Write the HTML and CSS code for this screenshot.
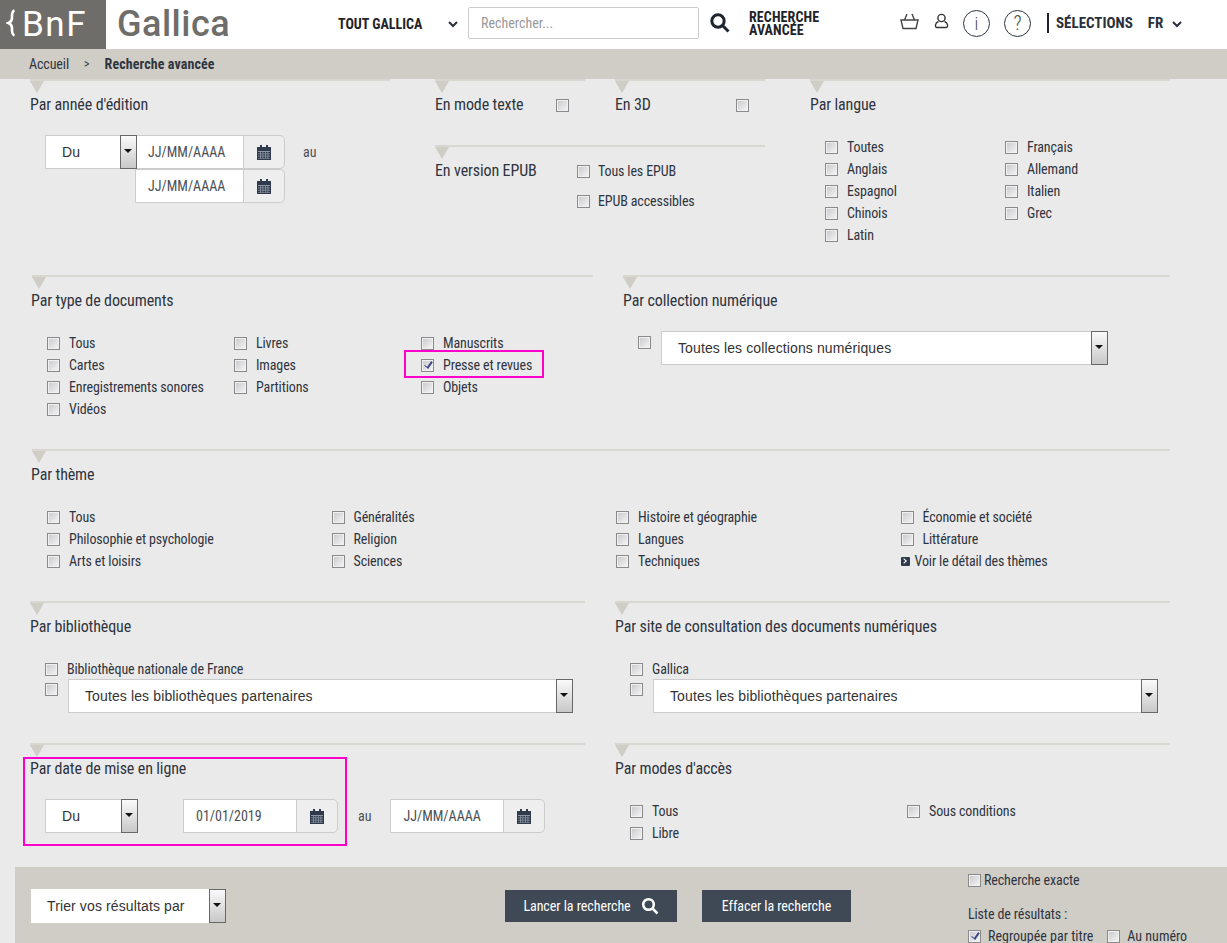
FILE: index.html
```html
<!DOCTYPE html>
<html lang="fr">
<head>
    <meta charset="UTF-8">
    <meta name="viewport" content="width=device-width, initial-scale=1.0">
    <title>Recherche avancée - Gallica</title>
    <link rel="stylesheet" href="styles.css">
</head>
<body>

    <header class="topbar">
        <div class="logo-bnf">
            <svg class="brace" viewBox="0 0 10 28"><path d="M8.500 1.500C5.500 2.500 6 6 6 9 6 11 5 13 2.500 14 5 15 6 17 6 19 6 22 5.500 25.500 8.500 26.500" /></svg>
            <span>BnF</span>
        </div>
        <div class="logo-gallica">Gallica</div>
        <div class="scope">TOUT GALLICA</div>
        <svg class="chevron scope-chevron" viewBox="0 0 10 7"><path d="M1 1l4 4 4-4" /></svg>
        <input class="search" type="text" placeholder="Rechercher...">
        <svg class="search-icon" viewBox="0 0 20 20"><circle cx="8" cy="8" r="6.200" /><path d="M12.500 12.500l6 6" /></svg>
        <div class="advanced">RECHERCHE<br>AVANCÉE</div>
        <svg class="basket" viewBox="0 0 19 17"><path d="M1 7h17l-2 8.500H3zM4.500 7L7 1M14.500 7L12 1" /></svg>
        <svg class="user" viewBox="0 0 15 16"><circle cx="7.500" cy="5" r="3.600" /><path d="M4.500 8.500C1 9.500 .5 14.500 3 14.500h9c2.500 0 2-5-1.500-6" /></svg>
        <div class="round info">i</div>
        <div class="round help">?</div>
        <div class="selections">SÉLECTIONS</div>
        <div class="lang">FR</div>
        <svg class="chevron lang-chevron" viewBox="0 0 10 7"><path d="M1 1l4 4 4-4" /></svg>
    </header>

    <nav class="crumbs">
        <span>Accueil</span>
        <span class="crumb-sep">&gt;</span>
        <b>Recherche avancée</b>
    </nav>

    <main class="form">

        <section class="row row-1">
            <div class="block col-year">
                <h3>Par année d'édition</h3>
                <div class="date-line first-line">
                    <div class="select select-du"><span>Du</span><i class="arrow"></i></div>
                    <div class="date date-joined"><span class="date-value">JJ/MM/AAAA</span><span class="addon"><svg class="cal" viewBox="0 0 14 15"><use href="#cal" /></svg></span></div>
                    <span class="au">au</span>
                </div>
                <div class="date-line second-line">
                    <div class="date date-joined"><span class="date-value">JJ/MM/AAAA</span><span class="addon"><svg class="cal" viewBox="0 0 14 15"><use href="#cal" /></svg></span></div>
                </div>
            </div>

            <div class="col-middle">
                <div class="middle-top">
                    <div class="block col-small">
                        <h3 class="inline-title">En mode texte <i class="cb"></i></h3>
                    </div>
                    <div class="block col-small">
                        <h3 class="inline-title">En 3D <i class="cb"></i></h3>
                    </div>
                </div>
                <div class="block">
                    <div class="epub">
                        <h3>En version EPUB</h3>
                        <div class="epub-list">
                            <label class="item"><i class="cb"></i>Tous les EPUB</label>
                            <label class="item"><i class="cb"></i>EPUB accessibles</label>
                        </div>
                    </div>
                </div>
            </div>

            <div class="block col-lang">
                <h3>Par langue</h3>
                <div class="checks lang-checks">
                    <label class="item"><i class="cb"></i>Toutes</label>
                    <label class="item"><i class="cb"></i>Français</label>
                    <label class="item"><i class="cb"></i>Anglais</label>
                    <label class="item"><i class="cb"></i>Allemand</label>
                    <label class="item"><i class="cb"></i>Espagnol</label>
                    <label class="item"><i class="cb"></i>Italien</label>
                    <label class="item"><i class="cb"></i>Chinois</label>
                    <label class="item"><i class="cb"></i>Grec</label>
                    <label class="item"><i class="cb"></i>Latin</label>
                </div>
            </div>
        </section>

        <section class="row row-2">
            <div class="block col-type">
                <h3>Par type de documents</h3>
                <div class="checks type-checks">
                    <label class="item"><i class="cb"></i>Tous</label>
                    <label class="item"><i class="cb"></i>Livres</label>
                    <label class="item"><i class="cb"></i>Manuscrits</label>
                    <label class="item"><i class="cb"></i>Cartes</label>
                    <label class="item"><i class="cb"></i>Images</label>
                    <label class="item marked"><i class="cb on"></i>Presse et revues</label>
                    <label class="item"><i class="cb"></i>Enregistrements sonores</label>
                    <label class="item"><i class="cb"></i>Partitions</label>
                    <label class="item"><i class="cb"></i>Objets</label>
                    <label class="item"><i class="cb"></i>Vidéos</label>
                </div>
            </div>
            <div class="block col-collection">
                <h3>Par collection numérique</h3>
                <div class="collection-line">
                    <i class="cb"></i>
                    <div class="select select-wide"><span>Toutes les collections numériques</span><i class="arrow"></i></div>
                </div>
            </div>
        </section>

        <section class="row row-3">
            <div class="block col-theme">
                <h3>Par thème</h3>
                <div class="checks theme-checks">
                    <label class="item"><i class="cb"></i>Tous</label>
                    <label class="item"><i class="cb"></i>Généralités</label>
                    <label class="item"><i class="cb"></i>Histoire et géographie</label>
                    <label class="item"><i class="cb"></i>Économie et société</label>
                    <label class="item"><i class="cb"></i>Philosophie et psychologie</label>
                    <label class="item"><i class="cb"></i>Religion</label>
                    <label class="item"><i class="cb"></i>Langues</label>
                    <label class="item"><i class="cb"></i>Littérature</label>
                    <label class="item"><i class="cb"></i>Arts et loisirs</label>
                    <label class="item"><i class="cb"></i>Sciences</label>
                    <label class="item"><i class="cb"></i>Techniques</label>
                    <a class="item detail"><i class="more"></i>Voir le détail des thèmes</a>
                </div>
            </div>
        </section>

        <section class="row row-4">
            <div class="block col-half">
                <h3>Par bibliothèque</h3>
                <div class="partner partner-left">
                    <label class="item"><i class="cb"></i>Bibliothèque nationale de France</label>
                    <div class="partner-line">
                        <i class="cb"></i>
                        <div class="select select-wide"><span>Toutes les bibliothèques partenaires</span><i class="arrow"></i></div>
                    </div>
                </div>
            </div>
            <div class="block col-half col-right">
                <h3>Par site de consultation des documents numériques</h3>
                <div class="partner partner-right">
                    <label class="item"><i class="cb"></i>Gallica</label>
                    <div class="partner-line">
                        <i class="cb"></i>
                        <div class="select select-wide"><span>Toutes les bibliothèques partenaires</span><i class="arrow"></i></div>
                    </div>
                </div>
            </div>
        </section>

        <section class="row row-5">
            <div class="block col-half online">
                <div class="mark-box"></div>
                <h3>Par date de mise en ligne</h3>
                <div class="date-line online-line">
                    <div class="select select-du"><span>Du</span><i class="arrow"></i></div>
                    <div class="date"><span class="date-value">01/01/2019</span><span class="addon"><svg class="cal" viewBox="0 0 14 15"><use href="#cal" /></svg></span></div>
                    <span class="au">au</span>
                    <div class="date"><span class="date-value">JJ/MM/AAAA</span><span class="addon"><svg class="cal" viewBox="0 0 14 15"><use href="#cal" /></svg></span></div>
                </div>
            </div>
            <div class="block col-half col-right">
                <h3>Par modes d'accès</h3>
                <div class="checks access-checks">
                    <label class="item"><i class="cb"></i>Tous</label>
                    <label class="item"><i class="cb"></i>Sous conditions</label>
                    <label class="item"><i class="cb"></i>Libre</label>
                </div>
            </div>
        </section>

        <section class="actions">
            <div class="select select-sort"><span>Trier vos résultats par</span><i class="arrow"></i></div>
            <button class="btn btn-run">Lancer la recherche
                <svg viewBox="0 0 18 18"><circle cx="7.500" cy="7.500" r="5.300" /><path d="M11.500 11.500l5 5" /></svg>
            </button>
            <button class="btn btn-clear">Effacer la recherche</button>
            <div class="options">
                <label class="item tight"><i class="cb"></i>Recherche exacte</label>
                <div class="list-title">Liste de résultats :</div>
                <div class="list-choice">
                    <label class="item"><i class="cb on"></i>Regroupée par titre</label>
                    <label class="item"><i class="cb"></i>Au numéro</label>
                </div>
            </div>
        </section>
    </main>

    <!-- calendar glyph shared by the date fields -->
    <svg class="defs" width="0" height="0">
        <symbol id="cal" viewBox="0 0 14 15">
            <path fill="#2f3b4c" d="M0 2h3V0h2v2h4V0h2v2h3v13H0z" />
            <path fill="#8d96a3" d="M1 6h12v1H1zm0 2.500h12v.8H1zm0 2.300h12v.8H1zm0 2.200h12v.6H1zM3 6h.8v8H3zm2.500 0h.8v8h-.8zm2.500 0h.8v8H8zm2.500 0h.8v8h-.8z" />
        </symbol>
    </svg>

</body>
</html>
```

FILE: styles.css
```css
html, body {
    margin: 0;
    padding: 0;
}

body {
    width: 1227px;
    height: 943px;
    overflow: hidden;
    background-color: #eaeaea;
    color: #2f3540;
    font-family: "Roboto", "Liberation Sans", sans-serif;
    font-stretch: 75%;
    font-size: 14px;
}

/* top bar */
.topbar {
    height: 49px;
    background-color: #fff;
    display: flex;
    align-items: center;
}

.logo-bnf {
    width: 106px;
    height: 49px;
    box-sizing: border-box;
    padding-left: 6px;
    background-color: #6f6d6a;
    color: #fff;
    display: flex;
    align-items: center;
    font-stretch: 100%;
    font-size: 35px;
    line-height: 49px;
    letter-spacing: 1.500px;
}

.brace {
    width: 10px;
    height: 28px;
    margin-right: 6px;
    margin-top: -3px;
    fill: none;
    stroke: #fff;
    stroke-width: 2.600;
}

.logo-gallica {
    margin-left: 11px;
    width: 221px;
    color: #6f6d6a;
    font-stretch: 100%;
    font-weight: 500;
    font-size: 36px;
    letter-spacing: 0.500px;
    line-height: 49px;
}

.scope {
    width: 110px;
    margin-top: -2px;
    font-weight: 700;
    font-size: 14px;
    color: #1f2328;
}

.chevron {
    width: 10px;
    height: 7px;
    fill: none;
    stroke: #2a2f38;
    stroke-width: 2;
}

.search {
    margin-left: 10px;
    width: 231px;
    height: 32px;
    box-sizing: border-box;
    padding: 0 12px;
    border: 1px solid #ccc;
    border-radius: 2px;
    font: inherit;
    font-size: 14px;
    margin-top: -3px;
}

.search::placeholder {
    color: #999;
}

.search-icon {
    margin-left: 11px;
    margin-top: -3px;
    width: 20px;
    height: 20px;
    fill: none;
    stroke: #1d2530;
    stroke-width: 3;
}

.advanced {
    margin-left: 19px;
    margin-top: -2px;
    width: 151px;
    font-weight: 700;
    font-size: 14px;
    letter-spacing: 0.100px;
    line-height: 13px;
    color: #1f2328;
}

.basket {
    width: 19px;
    height: 17px;
    margin-top: -7px;
    fill: none;
    stroke: #444;
    stroke-width: 1.400;
}

.user {
    margin-left: 15px;
    width: 15px;
    height: 16px;
    margin-top: -8px;
    fill: none;
    stroke: #333;
    stroke-width: 1.400;
}

.round {
    width: 25px;
    height: 25px;
    border: 1px solid #2c3542;
    border-radius: 50%;
    text-align: center;
    line-height: 25px;
    font-size: 18px;
    font-weight: 300;
    color: #444;
    margin-top: -3px;
}

.info {
    margin-left: 14px;
}

.help {
    margin-left: 14px;
    font-size: 20px;
}

.selections {
    margin-left: 16px;
    padding-left: 7px;
    border-left: 2px solid #1f2328;
    font-weight: 700;
    font-size: 15px;
    line-height: 20px;
    color: #2a303a;
    margin-top: -3px;
}

.lang {
    margin-left: 15px;
    font-weight: 700;
    font-size: 15px;
    color: #2a303a;
    margin-top: -3px;
}

.lang-chevron {
    margin-left: 9px;
}

/* breadcrumb */
.crumbs {
    height: 30px;
    box-sizing: border-box;
    padding-left: 29px;
    background-color: #d0cdc6;
    font-size: 14px;
    line-height: 30px;
    display: flex;
}

.crumbs span:first-child {
    letter-spacing: -0.100px;
}

.crumb-sep {
    margin-left: 15px;
    margin-right: 15px;
    font-size: 12px;
}

.crumbs b {
    letter-spacing: 0.100px;
}

/* sections */
.row {
    display: flex;
    align-items: flex-start;
}

.row-1 {
    height: 196px;
    padding-left: 30px;
}

.row-2 {
    height: 174px;
    padding-left: 32px;
}

.row-3 {
    height: 152px;
    padding-left: 32px;
}

.row-4 {
    height: 142px;
    padding-left: 30px;
}

.row-5 {
    height: 124px;
    padding-left: 30px;
}

.row-2 .col-type h3,
.row-3 h3 {
    margin-left: -1px;
}

.block {
    position: relative;
    border-top: 2px solid #d8d7d2;
}

.block::before {
    content: "";
    display: block;
    width: 14px;
    height: 12px;
    background-color: #d0cdc6;
    clip-path: polygon(0 0, 100% 0, 50% 100%);
}

h3 {
    margin: 2px 0 0;
    font-size: 16px;
    font-weight: 400;
    letter-spacing: -0.120px;
    line-height: 20px;
}

.col-year {
    width: 360px;
}

.col-middle {
    margin-left: 45px;
    width: 330px;
}

.middle-top {
    display: flex;
    gap: 30px;
}

.col-small {
    width: 150px;
    height: 66px;
    box-sizing: border-box;
}

.inline-title {
    display: flex;
    justify-content: space-between;
    align-items: center;
    padding-right: 16px;
}

.col-lang {
    margin-left: 45px;
    width: 360px;
}

.col-type {
    width: 561px;
}

.col-collection {
    margin-left: 30px;
    width: 547px;
}

.col-theme {
    width: 1138px;
}

.col-half {
    width: 555px;
}

.col-right {
    margin-left: 30px;
}

/* checkboxes */
.cb {
    flex: none;
    display: block;
    position: relative;
    box-sizing: border-box;
    width: 13px;
    height: 13px;
    border: 1px solid #8a8a8a;
    background: linear-gradient(135deg, #c8c8cc, #f6f6f8);
    box-shadow: inset 0 0 0 1px #f0f0f0;
}

.cb.on::after {
    content: "";
    position: absolute;
    left: 3.500px;
    top: 0.500px;
    width: 3px;
    height: 7px;
    border-right: 2px solid #3e4a86;
    border-bottom: 1.500px solid #3e4a86;
    transform: rotate(35deg);
}

.item {
    display: flex;
    align-items: center;
    gap: 9px;
    height: 22px;
    font-size: 14px;
    letter-spacing: -0.130px;
    white-space: nowrap;
}

.checks {
    display: grid;
    grid-auto-rows: 22px;
}

.lang-checks {
    margin: 21px 0 0 15px;
    grid-template-columns: repeat(2, 180px);
}

.type-checks {
    margin: 21px 0 0 15px;
    grid-template-columns: repeat(3, 187px);
}

.theme-checks {
    margin: 21px 0 0 15px;
    grid-template-columns: repeat(4, 284.500px);
}

.access-checks {
    margin: 21px 0 0 15px;
    grid-template-columns: repeat(2, 277px);
}

.marked {
    position: relative;
}

/* pink highlight around the checked type */
.marked::after {
    content: "";
    position: absolute;
    left: -17px;
    top: -4px;
    width: 136px;
    height: 24px;
    border: 2px solid #ff00cc;
}

.mark-box {
    position: absolute;
    left: -7px;
    top: 12px;
    width: 320px;
    height: 85px;
    border: 2px solid #ff00cc;
}

.detail {
    gap: 5px;
}

.more {
    display: block;
    position: relative;
    width: 9px;
    height: 9px;
    background-color: #2f3b4c;
    border-radius: 1px;
}

.more::after {
    content: "";
    position: absolute;
    left: 1px;
    top: 2px;
    width: 3px;
    height: 3px;
    border-top: 1.500px solid #fff;
    border-right: 1.500px solid #fff;
    transform: rotate(45deg);
}

/* selects */
.select {
    display: flex;
    align-items: center;
    box-sizing: border-box;
    height: 34px;
    background-color: #fff;
    border: 1px solid #ccc;
    font-family: "Liberation Sans", sans-serif;
    font-stretch: normal;
    font-size: 14px;
    letter-spacing: 0.120px;
    color: #333;
}

.select > span {
    flex: 1;
    padding-left: 16px;
}

.arrow {
    flex: none;
    position: relative;
    box-sizing: border-box;
    width: 17px;
    height: 34px;
    margin: -1px -1px -1px 0;
    border: 1px solid #66686c;
    background: linear-gradient(#fafafa, #c8c8c8);
}

.arrow::after {
    content: "";
    position: absolute;
    left: 3px;
    top: 13px;
    border-left: 4px solid transparent;
    border-right: 4px solid transparent;
    border-top: 4px solid #111;
}

.select-du {
    width: 92px;
}

.select-wide {
    flex: 1;
}

/* date fields */
.date-line {
    display: flex;
    align-items: center;
}

.first-line {
    margin: 20px 0 0 15px;
}

.second-line {
    margin-left: 106px;
}

.date {
    display: flex;
    box-sizing: border-box;
    width: 155px;
    height: 34px;
    border: 1px solid #ccc;
    border-radius: 0 5px 5px 0;
    background-color: #eee;
}

.date-joined {
    width: 149px;
    margin-left: -1px;
}

.second-line .date-joined {
    width: 150px;
}

.date-value {
    flex: 1;
    padding-left: 12px;
    background-color: #fff;
    font-size: 14px;
    line-height: 32px;
    color: #4b4f55;
}

.first-line .date-value {
    padding-left: 11px;
}

.addon {
    flex: none;
    box-sizing: border-box;
    width: 41px;
    display: flex;
    align-items: center;
    justify-content: center;
    border-left: 1px solid #ccc;
}

.cal {
    width: 14px;
    height: 15px;
}

.au {
    margin-left: 20px;
    font-size: 14px;
    color: #4b4f55;
}

.first-line .au {
    margin-left: 18px;
}

.online-line {
    margin: 20px 0 0 15px;
}

.online-line .select-du {
    width: 93px;
}

.online-line .date:nth-of-type(2) {
    margin-left: 45px;
}

.online-line .date:last-child {
    margin-left: 19px;
}

/* EPUB */
.epub {
    display: flex;
}

.epub h3 {
    flex: 0 0 142px;
}

.epub-list {
    margin-top: -3px;
}

.epub-list .item {
    height: 30px;
    gap: 8px;
}

.collection-line {
    display: flex;
    align-items: flex-start;
    gap: 10px;
    margin: 20px 0 0 15px;
    width: 470px;
}

.collection-line .cb {
    margin-top: 5px;
}

.partner {
    margin-top: 21px;
}

.partner-left {
    margin-left: 15px;
    width: 528px;
}

.partner-right {
    margin-left: 15px;
    width: 528px;
}

.partner-line {
    display: flex;
    align-items: flex-start;
    gap: 10px;
    margin-top: -1px;
}

.partner-line .cb {
    margin-top: 4px;
}

/* bottom bar */
.actions {
    margin-left: 15px;
    height: 76px;
    background-color: #d0cdc6;
    display: flex;
    align-items: flex-start;
}

.select-sort {
    margin: 22px 0 0 16px;
    width: 195px;
    border: 0;
}

.select-sort .arrow {
    margin: 0;
}

.btn {
    display: flex;
    align-items: center;
    justify-content: center;
    gap: 10px;
    height: 32px;
    margin-top: 23px;
    padding: 0;
    border: none;
    background-color: #3f4955;
    color: #fff;
    font: inherit;
    font-size: 14px;
    letter-spacing: -0.050px;
}

.btn svg {
    width: 18px;
    height: 18px;
    fill: none;
    stroke: #fff;
    stroke-width: 2.500;
}

.btn-run {
    margin-left: 279px;
    width: 172px;
}

.btn-clear {
    margin-left: 25px;
    width: 149px;
}

.options {
    margin-left: 117px;
    font-size: 14px;
}

.tight {
    gap: 3px;
    margin-top: 2px;
}

.list-title {
    margin-top: 12px;
    line-height: 22px;
    letter-spacing: -0.130px;
}

.list-choice {
    display: flex;
    gap: 14px;
}

.list-choice .item {
    gap: 7px;
    letter-spacing: 0;
}

.defs {
    position: absolute;
}
```
